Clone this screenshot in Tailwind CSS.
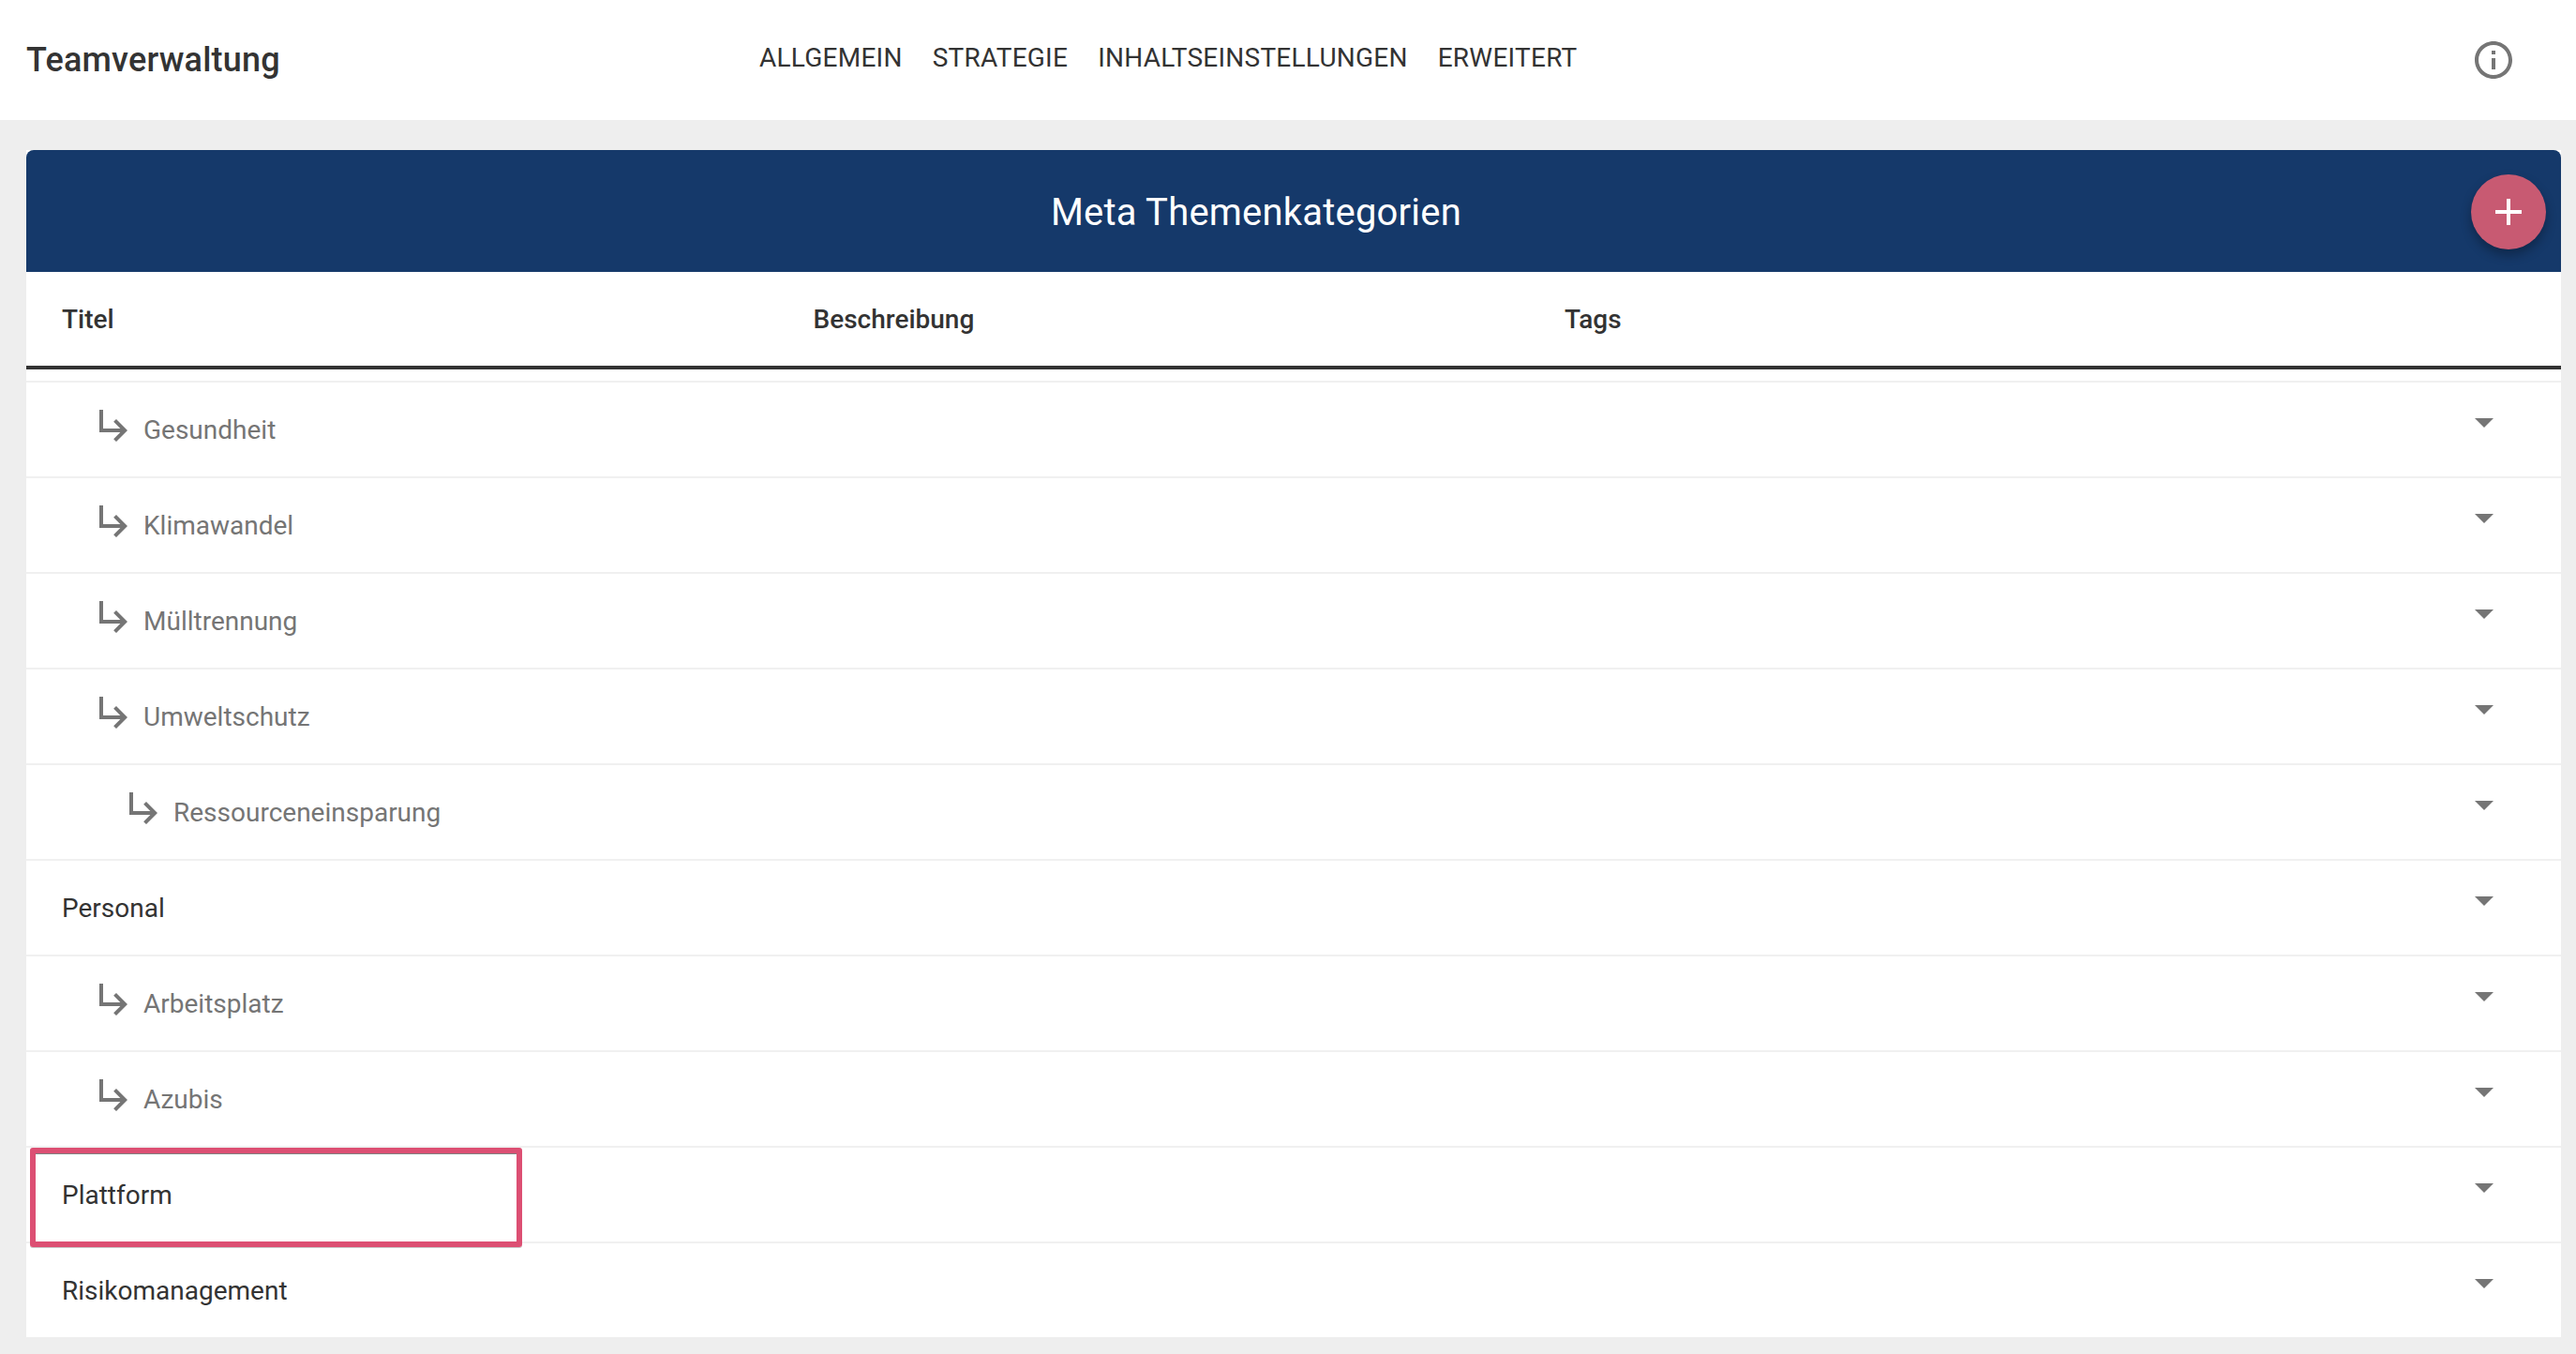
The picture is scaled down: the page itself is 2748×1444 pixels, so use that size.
<!DOCTYPE html>
<html lang="de">
<head>
<meta charset="utf-8">
<script src="https://cdn.jsdelivr.net/npm/@tailwindcss/browser@4"></script>
<title>Teamverwaltung</title>
</head>
<body class="bg-[#eeeeee] font-[Roboto,sans-serif] text-[#333333] antialiased w-[2748px] h-[1444px] overflow-hidden">
<header class="h-[128px] bg-white flex items-center pl-[28px]">
  <h1 class="w-[782px] text-[36px] font-medium leading-none tracking-[0.2px]">Teamverwaltung</h1>
  <nav class="flex gap-[32px] text-[28px] leading-none uppercase tracking-[0.24px] -mt-[4px]">
    <a>Allgemein</a><a>Strategie</a><a>Inhaltseinstellungen</a><a>Erweitert</a>
  </nav>
  <svg class="ml-auto mr-[64px] w-[48px] h-[48px] fill-[#757575]" viewBox="0 0 24 24"><path d="M11 7h2v2h-2zm0 4h2v6h-2zm1-9C6.48 2 2 6.48 2 12s4.48 10 10 10 10-4.48 10-10S17.52 2 12 2zm0 18c-4.41 0-8-3.59-8-8s3.59-8 8-8 8 3.59 8 8-3.59 8-8 8z"/></svg>
</header>
<main class="mt-[32px] ml-[28px] mr-[16px] bg-white">
  <div class="h-[130px] bg-[#15396a] rounded-t-[8px] flex items-center text-white pl-[16px] pr-[16px]">
    <h2 class="flex-1 text-center text-[40px] leading-none tracking-[0.2px] pt-[3px]">Meta Themenkategorien</h2>
    <button class="w-[80px] h-[80px] mt-[2px] rounded-full bg-[#c85a72] flex items-center justify-center shadow-[0_6px_12px_rgba(0,0,0,0.3)]">
      <svg class="w-[28px] h-[28px] fill-white" viewBox="0 0 28 28"><path d="M12 0h4v12h12v4H16v12h-4V16H0v-4h12z"/></svg>
    </button>
  </div>
  <div class="h-[104px] border-b-4 border-[#333333] grid grid-cols-[801.5px_801.5px_1fr] items-center pl-[38px] pt-[2px] text-[28px] font-medium">
    <div>Titel</div><div>Beschreibung</div><div>Tags</div>
  </div>
  <div class="pt-[12px]">
    <div class="h-[102px] border-t-2 border-[#f0f0f0] flex items-center pl-[70px] text-[#757575] text-[28px]">
      <svg class="w-[48px] h-[48px] mb-[10px] fill-[#757575]" viewBox="0 0 24 24"><path d="M19 15l-6 6-1.42-1.42L15.17 16H4V4h2v10h9.17l-3.59-3.58L13 9l6 6z"/></svg>
      <span class="ml-[7px] pt-[2px]">Gesundheit</span>
      <svg class="ml-auto mr-[58px] self-start mt-[18px] w-[48px] h-[48px] fill-[#757575]" viewBox="0 0 24 24"><path d="M7 10l5 5 5-5z"/></svg>
    </div>
    <div class="h-[102px] border-t-2 border-[#f0f0f0] flex items-center pl-[70px] text-[#757575] text-[28px]">
      <svg class="w-[48px] h-[48px] mb-[10px] fill-[#757575]" viewBox="0 0 24 24"><path d="M19 15l-6 6-1.42-1.42L15.17 16H4V4h2v10h9.17l-3.59-3.58L13 9l6 6z"/></svg>
      <span class="ml-[7px] pt-[2px]">Klimawandel</span>
      <svg class="ml-auto mr-[58px] self-start mt-[18px] w-[48px] h-[48px] fill-[#757575]" viewBox="0 0 24 24"><path d="M7 10l5 5 5-5z"/></svg>
    </div>
    <div class="h-[102px] border-t-2 border-[#f0f0f0] flex items-center pl-[70px] text-[#757575] text-[28px]">
      <svg class="w-[48px] h-[48px] mb-[10px] fill-[#757575]" viewBox="0 0 24 24"><path d="M19 15l-6 6-1.42-1.42L15.17 16H4V4h2v10h9.17l-3.59-3.58L13 9l6 6z"/></svg>
      <span class="ml-[7px] pt-[2px]">Mülltrennung</span>
      <svg class="ml-auto mr-[58px] self-start mt-[18px] w-[48px] h-[48px] fill-[#757575]" viewBox="0 0 24 24"><path d="M7 10l5 5 5-5z"/></svg>
    </div>
    <div class="h-[102px] border-t-2 border-[#f0f0f0] flex items-center pl-[70px] text-[#757575] text-[28px]">
      <svg class="w-[48px] h-[48px] mb-[10px] fill-[#757575]" viewBox="0 0 24 24"><path d="M19 15l-6 6-1.42-1.42L15.17 16H4V4h2v10h9.17l-3.59-3.58L13 9l6 6z"/></svg>
      <span class="ml-[7px] pt-[2px]">Umweltschutz</span>
      <svg class="ml-auto mr-[58px] self-start mt-[18px] w-[48px] h-[48px] fill-[#757575]" viewBox="0 0 24 24"><path d="M7 10l5 5 5-5z"/></svg>
    </div>
    <div class="h-[102px] border-t-2 border-[#f0f0f0] flex items-center pl-[102px] text-[#757575] text-[28px]">
      <svg class="w-[48px] h-[48px] mb-[10px] fill-[#757575]" viewBox="0 0 24 24"><path d="M19 15l-6 6-1.42-1.42L15.17 16H4V4h2v10h9.17l-3.59-3.58L13 9l6 6z"/></svg>
      <span class="ml-[7px] pt-[2px]">Ressourceneinsparung</span>
      <svg class="ml-auto mr-[58px] self-start mt-[18px] w-[48px] h-[48px] fill-[#757575]" viewBox="0 0 24 24"><path d="M7 10l5 5 5-5z"/></svg>
    </div>
    <div class="h-[102px] border-t-2 border-[#f0f0f0] flex items-center pl-[38px] text-[28px]">
      <span class="pt-[2px]">Personal</span>
      <svg class="ml-auto mr-[58px] self-start mt-[18px] w-[48px] h-[48px] fill-[#757575]" viewBox="0 0 24 24"><path d="M7 10l5 5 5-5z"/></svg>
    </div>
    <div class="h-[102px] border-t-2 border-[#f0f0f0] flex items-center pl-[70px] text-[#757575] text-[28px]">
      <svg class="w-[48px] h-[48px] mb-[10px] fill-[#757575]" viewBox="0 0 24 24"><path d="M19 15l-6 6-1.42-1.42L15.17 16H4V4h2v10h9.17l-3.59-3.58L13 9l6 6z"/></svg>
      <span class="ml-[7px] pt-[2px]">Arbeitsplatz</span>
      <svg class="ml-auto mr-[58px] self-start mt-[18px] w-[48px] h-[48px] fill-[#757575]" viewBox="0 0 24 24"><path d="M7 10l5 5 5-5z"/></svg>
    </div>
    <div class="h-[102px] border-t-2 border-[#f0f0f0] flex items-center pl-[70px] text-[#757575] text-[28px]">
      <svg class="w-[48px] h-[48px] mb-[10px] fill-[#757575]" viewBox="0 0 24 24"><path d="M19 15l-6 6-1.42-1.42L15.17 16H4V4h2v10h9.17l-3.59-3.58L13 9l6 6z"/></svg>
      <span class="ml-[7px] pt-[2px]">Azubis</span>
      <svg class="ml-auto mr-[58px] self-start mt-[18px] w-[48px] h-[48px] fill-[#757575]" viewBox="0 0 24 24"><path d="M7 10l5 5 5-5z"/></svg>
    </div>
    <div class="relative h-[102px] border-t-2 border-[#f0f0f0] flex items-center pl-[38px] text-[28px]">
      <span class="pt-[2px]">Plattform</span>
      <svg class="ml-auto mr-[58px] self-start mt-[18px] w-[48px] h-[48px] fill-[#757575]" viewBox="0 0 24 24"><path d="M7 10l5 5 5-5z"/></svg>
      <div class="absolute left-[4px] top-0 w-[525px] h-[106px] border-[6px] border-[#dc4f73] rounded-[3px] shadow-[inset_0_1px_0_#808080,0_1px_0_#c8c8c8]"></div>
    </div>
    <div class="h-[102px] border-t-2 border-[#f0f0f0] flex items-center pl-[38px] text-[28px]">
      <span class="pt-[2px]">Risikomanagement</span>
      <svg class="ml-auto mr-[58px] self-start mt-[18px] w-[48px] h-[48px] fill-[#757575]" viewBox="0 0 24 24"><path d="M7 10l5 5 5-5z"/></svg>
    </div>
  </div>
</main>
</body>
</html>
